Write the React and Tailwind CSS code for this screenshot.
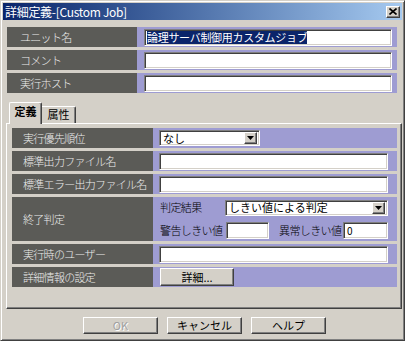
import React from "react";

const font = { fontFamily: '"Noto Sans CJK JP", "Noto Sans", sans-serif' };

const sunken =
  "bg-white border border-t-[#808080] border-l-[#808080] border-b-white border-r-white shadow-[inset_1px_1px_0_#404040,inset_-1px_-1px_0_#d4d0c8]";
const raised =
  "bg-[#d4d0c8] border border-t-white border-l-white border-b-[#404040] border-r-[#404040] shadow-[inset_-1px_-1px_0_#808080]";

const Label = ({ children, w, className = "" }) => (
  <div
    className={`flex items-center bg-[#5b5b57] text-[#ececec] text-[11px] font-light tracking-[-0.7px] ${w} ${className}`}
  >
    {children}
  </div>
);

const Combo = ({ value, w }) => (
  <div className={`${sunken} ${w} h-[16px] flex items-center pl-[3px] pr-[2px]`}>
    <span className="flex-1 text-[11px] text-black leading-none">{value}</span>
    <div className={`${raised} w-[13px] h-[12px] flex items-center justify-center`}>
      <svg width="7" height="4" viewBox="0 0 7 4">
        <path d="M0 0h7L3.5 4z" fill="#000" />
      </svg>
    </div>
  </div>
);

const Button = ({ children, disabled }) => (
  <div
    className={`${raised} w-[75px] h-[17px] flex items-center justify-center text-[11px] leading-none ${
      disabled ? "text-[#a0a0a0] [text-shadow:1px_1px_0_#fff]" : "text-black"
    }`}
  >
    {children}
  </div>
);

const App = () => {
  const topRows = [
    { label: "ユニット名", selected: "論理サーバ制御用カスタムジョブ" },
    { label: "コメント" },
    { label: "実行ホスト" },
  ];

  return (
    <div className="w-[408px] h-[345px] bg-white" style={font}>
      <div className="w-[405px] h-[341px] bg-[#d4d0c8] p-[3px] flex flex-col border border-t-[#d4d0c8] border-l-[#d4d0c8] border-b-[#404040] border-r-[#404040] shadow-[inset_1px_1px_0_#fff,inset_-1px_-1px_0_#808080]">
        {/* title bar */}
        <div className="h-[17px] -mt-[1px] -mx-[1px] flex items-center justify-between bg-gradient-to-r from-[#0a246a] to-[#a6caf0] pl-[2px] pr-[2px]">
          <span className="text-white text-[12px] leading-none tracking-[-0.3px]">詳細定義-[Custom Job]</span>
          <div className={`${raised} w-[14px] h-[12px] flex items-center justify-center`}>
            <svg width="8" height="7" viewBox="0 0 8 7">
              <path d="M0.5 0.5L7.5 6.5M7.5 0.5L0.5 6.5" stroke="#000" strokeWidth="1.6" />
            </svg>
          </div>
        </div>

        {/* top rows */}
        <div className="mt-[7px] ml-[3px] flex flex-col gap-[3px]">
          {topRows.map((r, i) => (
            <div key={i} className="flex h-[20px]">
              <Label w="w-[130px]" className="pl-[13px]">
                {r.label}
              </Label>
              <div className="w-[260px] bg-[#9e9cd2] flex items-center pl-[7px] pr-[5px]">
                <div className={`${sunken} w-full h-[17px] flex items-center pl-[2px]`}>
                  {r.selected && (
                    <span className="bg-[#0a246a] text-white text-[11px] leading-[13px] tracking-[-0.3px]">
                      {r.selected}
                    </span>
                  )}
                </div>
              </div>
            </div>
          ))}
        </div>

        {/* tabs */}
        <div className="mt-[8px] ml-[5px] h-[22px] flex items-end relative z-10">
          <div className="h-[22px] w-[33px] bg-[#d4d0c8] border border-t-white border-l-white border-r-[#404040] border-b-0 rounded-t-[2px] shadow-[inset_-1px_0_0_#808080] flex items-start justify-center pt-[3px] -mb-[1px]">
            <span className="text-[11px] font-bold leading-none text-black">定義</span>
          </div>
          <div className="h-[17px] w-[34px] bg-[#d4d0c8] border border-t-white border-l-0 border-r-[#404040] border-b-0 rounded-tr-[2px] shadow-[inset_-1px_0_0_#808080] flex items-start justify-center pt-[2px]">
            <span className="text-[11px] leading-none text-black">属性</span>
          </div>
        </div>

        {/* tab panel */}
        <div className="ml-[2px] w-[396px] h-[186px] border border-t-white border-l-white border-b-[#404040] border-r-[#404040] shadow-[inset_-1px_-1px_0_#808080] pl-[5px] pt-[4px] flex flex-col gap-[3px]">
          <div className="flex h-[20px]">
            <Label w="w-[141px]" className="pl-[11px]">実行優先順位</Label>
            <div className="w-[244px] bg-[#9e9cd2] flex items-center pl-[6px]">
              <Combo value="なし" w="w-[101px]" />
            </div>
          </div>
          {["標準出力ファイル名", "標準エラー出力ファイル名"].map((l) => (
            <div key={l} className="flex h-[20px]">
              <Label w="w-[141px]" className="pl-[11px]">{l}</Label>
              <div className="w-[244px] bg-[#9e9cd2] flex items-center pl-[6px] pr-[9px]">
                <div className={`${sunken} w-full h-[17px]`} />
              </div>
            </div>
          ))}
          <div className="flex h-[44px]">
            <Label w="w-[141px]" className="pl-[11px]">終了判定</Label>
            <div className="w-[244px] bg-[#9e9cd2] flex flex-col pl-[7px] pt-[3px] gap-[7px]">
              <div className="flex items-center h-[15px]">
                <span className="w-[65px] text-[11px] font-light tracking-[-0.6px] text-black">判定結果</span>
                <Combo value="しきい値による判定" w="w-[163px]" />
              </div>
              <div className="flex items-center h-[17px]">
                <span className="w-[66px] text-[11px] font-light tracking-[-0.6px] text-black">警告しきい値</span>
                <div className={`${sunken} w-[43px] h-[17px]`} />
                <span className="ml-[10px] w-[64px] text-[11px] font-light tracking-[-0.6px] text-black">異常しきい値</span>
                <div className={`${sunken} w-[45px] h-[17px] flex items-center pl-[3px] text-[10px] leading-none text-black`}>0</div>
              </div>
            </div>
          </div>
          <div className="flex h-[20px]">
            <Label w="w-[141px]" className="pl-[11px]">実行時のユーザー</Label>
            <div className="w-[244px] bg-[#9e9cd2] flex items-center pl-[6px] pr-[9px]">
              <div className={`${sunken} w-full h-[17px]`} />
            </div>
          </div>
          <div className="flex h-[20px]">
            <Label w="w-[141px]" className="pl-[11px]">詳細情報の設定</Label>
            <div className="w-[244px] bg-[#9e9cd2] flex items-center pl-[7px]">
              <div className={`${raised} w-[74px] h-[18px] flex items-center justify-center text-[11px] leading-none text-black`}>
                詳細...
              </div>
            </div>
          </div>
        </div>

        {/* buttons */}
        <div className="mt-[8px] ml-[79px] flex gap-[9px]">
          <Button disabled>OK</Button>
          <Button>キャンセル</Button>
          <Button>ヘルプ</Button>
        </div>
      </div>
    </div>
  );
};

export default App;
